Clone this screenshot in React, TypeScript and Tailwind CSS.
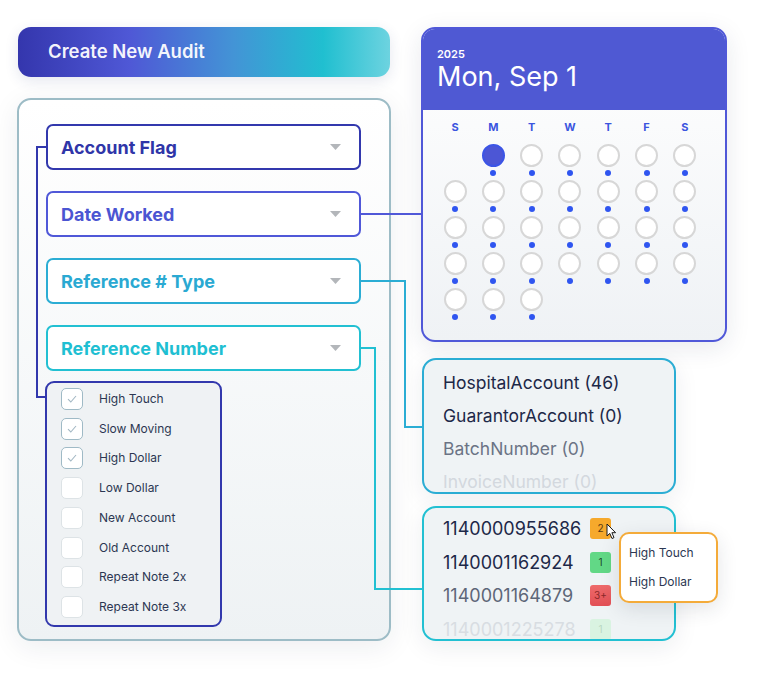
const FIELDS = [
  { label: 'Account Flag', border: 'border-[#3238ad]', text: 'text-[#2f35a8]' },
  { label: 'Date Worked', border: 'border-[#5058d8]', text: 'text-[#4b55d2]' },
  { label: 'Reference # Type', border: 'border-[#2badd4]', text: 'text-[#2aa9d2]' },
  { label: 'Reference Number', border: 'border-[#22c0d2]', text: 'text-[#1fbfd2]' },
];

const FLAGS = [
  { name: 'High Touch', on: true },
  { name: 'Slow Moving', on: true },
  { name: 'High Dollar', on: true },
  { name: 'Low Dollar', on: false },
  { name: 'New Account', on: false },
  { name: 'Old Account', on: false },
  { name: 'Repeat Note 2x', on: false },
  { name: 'Repeat Note 3x', on: false },
];

const WEEKDAYS = ['S', 'M', 'T', 'W', 'T', 'F', 'S'];

const REF_TYPES = [
  { name: 'HospitalAccount (46)', cls: 'text-[#1d2848]' },
  { name: 'GuarantorAccount (0)', cls: 'text-[#1d2848]' },
  { name: 'BatchNumber (0)', cls: 'text-[#6b7385]' },
  { name: 'InvoiceNumber (0)', cls: 'text-[#d3d8de]' },
];

const REF_NUMBERS = [
  { num: '1140000955686', cls: 'text-[#1d2848]', badge: '2', badgeCls: 'bg-[#f6a92c] text-[#5a3a10]' },
  { num: '1140001162924', cls: 'text-[#1d2848]', badge: '1', badgeCls: 'bg-[#62d886] text-[#1d4a2a]' },
  { num: '1140001164879', cls: 'text-[#5d6678]', badge: '3+', badgeCls: 'bg-[linear-gradient(180deg,#ee6b6b,#e24f55)] text-[#8a2a2a]' },
  { num: '1140001225278', cls: 'text-[#d8dde2]', badge: '1', badgeCls: 'bg-[#d9f3e1] text-[#b9d8c2]' },
];

function Caret() {
  return (
    <svg width="11" height="6" viewBox="0 0 11 6">
      <path d="M0 0 L11 0 L5.5 6 Z" fill="#b3b6ba" />
    </svg>
  );
}

function Checkbox({ on }: { on: boolean }) {
  return (
    <div
      className={`flex h-[22px] w-[22px] items-center justify-center rounded-[5px] border bg-white ${
        on ? 'border-[#9fbac6]' : 'border-[#dde3e6]'
      }`}
    >
      {on && (
        <svg width="10" height="8" viewBox="0 0 10 8">
          <path d="M1 4.2 L3.8 7 L9 1" fill="none" stroke="#a3b8c4" strokeWidth="1.1" />
        </svg>
      )}
    </div>
  );
}

function Calendar() {
  const cells: (number | null)[] = [null, ...Array.from({ length: 30 }, (_, i) => i + 1)];
  return (
    <div className="h-[315px] w-[306px] overflow-hidden rounded-[14px] border-2 border-[#5058d8] bg-[linear-gradient(180deg,#ffffff,#eff2f5)] shadow-[0_6px_24px_rgba(30,40,80,0.10)]">
      <div className="h-[81px] bg-[#4f59d3] pl-[14px] pt-[18px] text-white">
        <div className="text-[11px] font-semibold leading-[14px]">2025</div>
        <div className="text-[27px] leading-[32px]">Mon, Sep 1</div>
      </div>
      <div className="pl-[13px] pt-[10px]">
        <div className="grid w-[268px] grid-cols-7">
          {WEEKDAYS.map((d, i) => (
            <div key={i} className="text-center text-[11px] font-bold leading-[14px] text-[#3b55df]">
              {d}
            </div>
          ))}
        </div>
        <div className="mt-[10px] grid w-[268px] grid-cols-7">
          {cells.map((day, i) => (
            <div key={i} className="flex h-[36px] flex-col items-center">
              {day !== null && (
                <>
                  <div
                    className={`h-[23px] w-[23px] rounded-full border-2 ${
                      day === 1 ? 'border-[#3c55e6] bg-[#4c56d5]' : 'border-[#d7d7d7] bg-white'
                    }`}
                  />
                  <div className="mt-[3px] h-[6px] w-[6px] rounded-full bg-[#2f55f0]" />
                </>
              )}
            </div>
          ))}
        </div>
      </div>
    </div>
  );
}

function Cursor() {
  return (
    <svg width="11" height="17" viewBox="0 0 11 17">
      <path
        d="M1 1 L1 13 L3.8 10.4 L6 15.5 L8 14.6 L5.9 9.7 L9.6 9.7 Z"
        fill="#ffffff"
        stroke="#1a1a1a"
        strokeWidth="1"
        strokeLinejoin="round"
      />
    </svg>
  );
}

function Connectors() {
  return (
    <svg className="pointer-events-none absolute left-0 top-0" width="768" height="675">
      <polyline points="46,147 37,147 37,397 46,397" fill="none" stroke="#3238ad" strokeWidth="2" />
      <polyline points="361,214 421,214" fill="none" stroke="#5058d8" strokeWidth="2" />
      <polyline points="361,281 405,281 405,427 422,427" fill="none" stroke="#2badd4" strokeWidth="2" />
      <polyline points="361,348 375,348 375,589 422,589" fill="none" stroke="#22c0d2" strokeWidth="2" />
    </svg>
  );
}

export default function App() {
  return (
    <div className="relative h-[675px] w-[768px] overflow-hidden bg-white font-['Inter',sans-serif]">
      <div className="flex pl-[17px] pt-[27px]">
        {/* left: audit form */}
        <div className="w-[374px]">
          <div className="ml-[1px] flex h-[50px] w-[372px] items-center rounded-[13px] bg-[linear-gradient(90deg,#3436ad_0%,#4f58d6_30%,#4394d6_58%,#20bfd0_82%,#6dd3e0_100%)] pl-[30px] shadow-[0_4px_14px_rgba(40,60,120,0.12)]">
            <span className="text-[18.5px] font-semibold text-white/95">Create New Audit</span>
          </div>
          <div className="mt-[21px] h-[543px] rounded-[14px] border-2 border-[#9dbcc6] bg-[linear-gradient(180deg,#ffffff,#eef2f4)] pl-[27px] pt-[24px] shadow-[0_6px_28px_rgba(30,40,60,0.08)]">
            <div className="flex flex-col gap-[21px]">
              {FIELDS.map((f) => (
                <div
                  key={f.label}
                  className={`flex h-[46px] w-[315px] items-center justify-between rounded-[7px] border-2 bg-white pl-[13px] pr-[18px] ${f.border}`}
                >
                  <span className={`text-[18px] font-bold ${f.text}`}>{f.label}</span>
                  <Caret />
                </div>
              ))}
            </div>
            <div className="-ml-[1px] mt-[10px] h-[246px] w-[177px] rounded-[9px] border-2 border-[#3238ad] bg-[#eff2f4] pl-[14px] pt-[1px]">
              {FLAGS.map((f) => (
                <div key={f.name} className="flex h-[29.75px] items-center gap-[16px]">
                  <Checkbox on={f.on} />
                  <span className="text-[12px] text-[#2c3752]">{f.name}</span>
                </div>
              ))}
            </div>
          </div>
        </div>

        {/* right: pickers */}
        <div className="ml-[30px]">
          <Calendar />
          <div className="ml-[1px] mt-[16px] h-[136px] w-[254px] overflow-hidden rounded-[14px] border-2 border-[#2badd4] bg-[#eff3f5] pl-[19px] pt-[6px] shadow-[0_6px_24px_rgba(30,40,60,0.08)]">
            {REF_TYPES.map((r) => (
              <div key={r.name} className={`text-[17.5px] leading-[33px] ${r.cls}`}>
                {r.name}
              </div>
            ))}
          </div>
          <div className="ml-[1px] mt-[12px] h-[135px] w-[254px] overflow-hidden rounded-[14px] border-2 border-[#22c0d2] bg-[#eff3f5] pl-[19px] pt-[4px] shadow-[0_6px_24px_rgba(30,40,60,0.08)]">
            {REF_NUMBERS.map((r) => (
              <div key={r.num} className="flex h-[33.5px] items-center">
                <span className={`w-[147px] text-[18px] ${r.cls}`}>{r.num}</span>
                <span
                  className={`flex h-[21px] w-[21px] items-center justify-center rounded-[3px] text-[10px] ${r.badgeCls}`}
                >
                  {r.badge}
                </span>
              </div>
            ))}
          </div>
        </div>
      </div>

      <Connectors />

      {/* flag popover on the first badge */}
      <div className="absolute left-[619px] top-[532px] flex h-[71px] w-[99px] flex-col justify-center gap-[13px] rounded-[10px] border-2 border-[#f4ab3a] bg-white pl-[8px] text-[12px] leading-[16px] text-[#2c3752] shadow-[0_6px_20px_rgba(30,40,60,0.12)]">
        <span>High Touch</span>
        <span>High Dollar</span>
      </div>
      <div className="absolute left-[606px] top-[523px]">
        <Cursor />
      </div>
    </div>
  );
}
